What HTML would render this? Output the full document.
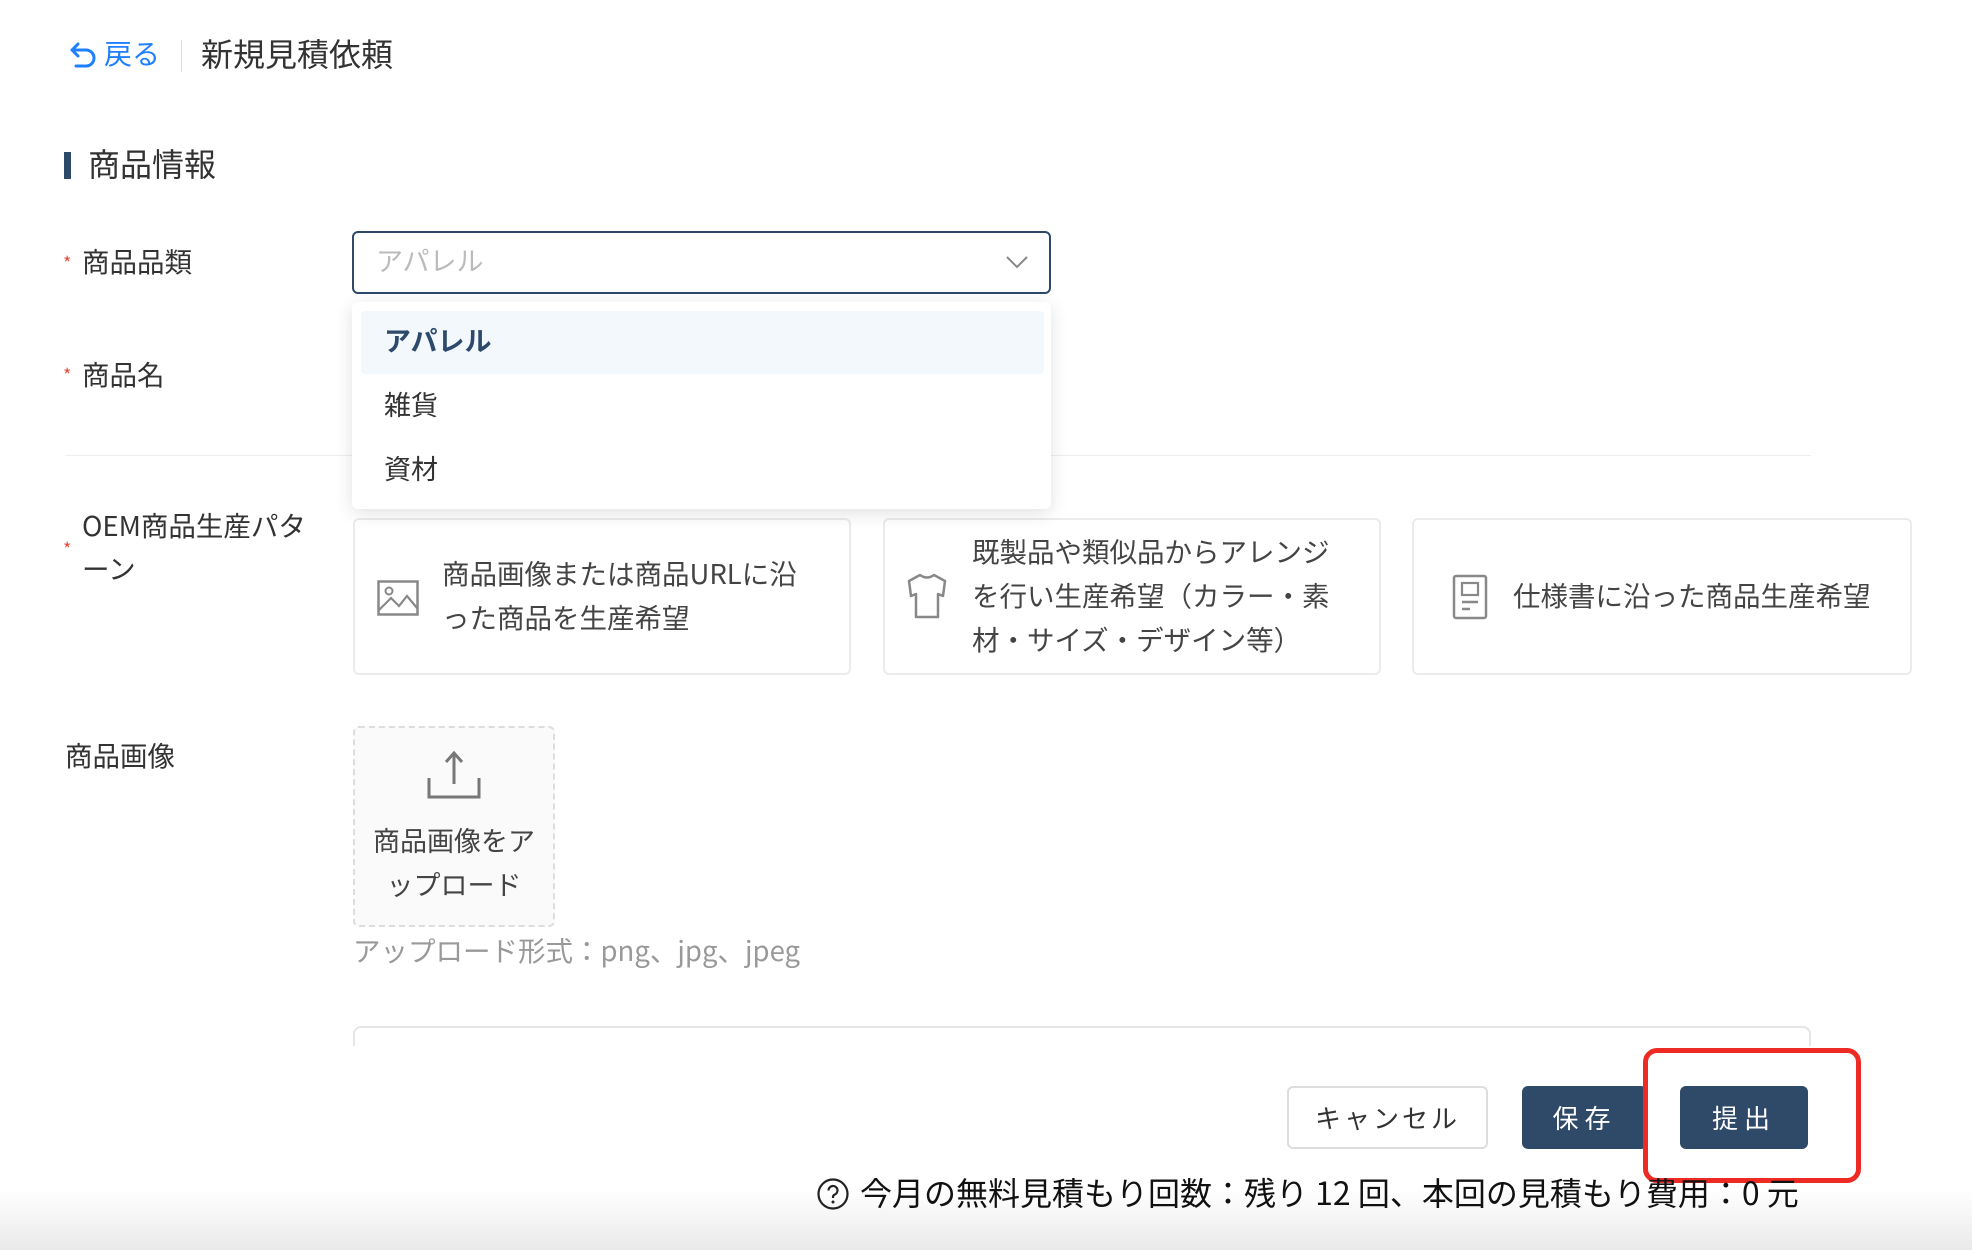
<!DOCTYPE html>
<html><head><meta charset="utf-8"><style>
*{box-sizing:border-box;margin:0;padding:0}
body{width:1972px;height:1250px;position:relative;overflow:hidden;background:#fff;font-family:"Noto Sans CJK JP","Liberation Sans",sans-serif;color:#333}
.a{position:absolute;white-space:nowrap}
.lbl{font-size:27.5px;color:#333;line-height:32px}
.star{color:#e74c3c;font-size:18px}
.card{position:absolute;top:518px;height:157px;border:2px solid #ebebeb;border-radius:6px;background:#fff}
.ct{position:absolute;font-size:27.5px;line-height:44px;color:#444;white-space:nowrap}
.btn{position:absolute;top:1086px;height:63px;border-radius:6px;font-size:26px;display:flex;align-items:center;justify-content:center;letter-spacing:6px}
</style></head><body>
<svg class="a" style="left:68px;top:40px" width="34" height="32" viewBox="0 0 34 32"><path d="M10 4 L4 10 L10 16 M4 10 H18 a8 8 0 0 1 0 16 H8" fill="none" stroke="#1e80ff" stroke-width="3" stroke-linecap="round" stroke-linejoin="round"/></svg>
<div class="a" style="left:104px;top:35px;font-size:28px;color:#1e80ff;line-height:36px">戻る</div>
<div class="a" style="left:181px;top:40px;width:1px;height:32px;background:#ddd"></div>
<div class="a" style="left:201px;top:33px;font-size:32px;color:#333;line-height:40px">新規見積依頼</div>
<div class="a" style="left:64px;top:152px;width:7px;height:27px;background:#2d4a6b"></div>
<div class="a" style="left:88px;top:143px;font-size:32px;color:#333;line-height:40px">商品情報</div>
<div class="a star" style="left:63px;top:250px">*</div>
<div class="a lbl" style="left:82px;top:244px">商品品類</div>
<div class="a star" style="left:63px;top:362px">*</div>
<div class="a lbl" style="left:82px;top:357px">商品名</div>
<div class="a" style="left:65px;top:455px;width:1746px;height:1px;background:#eee"></div>
<div class="a lbl" style="left:82px;top:508px">OEM商品生産パタ</div>
<div class="a star" style="left:63px;top:536px">*</div>
<div class="a lbl" style="left:82px;top:551px">ーン</div>
<div class="a lbl" style="left:65px;top:738px">商品画像</div>
<div class="a" style="left:352px;top:231px;width:699px;height:63px;border:2px solid #2d4a6b;border-radius:6px;background:#fff"></div>
<div class="a" style="left:376px;top:243px;font-size:27px;color:#bbb;line-height:34px">アパレル</div>
<svg class="a" style="left:1005px;top:254px" width="24" height="16" viewBox="0 0 24 16"><path d="M2 3 L12 13 L22 3" fill="none" stroke="#888" stroke-width="2"/></svg>
<div class="card" style="left:353px;width:498px"></div>
<svg class="a" style="left:377px;top:580px" width="42" height="36" viewBox="0 0 42 36"><rect x="1.5" y="1.5" width="39" height="33" fill="none" stroke="#888" stroke-width="2.5"/><circle cx="12" cy="11" r="3.5" fill="none" stroke="#888" stroke-width="2"/><path d="M2 30 L14 18 L22 26 L30 16 L40 28" fill="none" stroke="#888" stroke-width="2.2"/></svg>
<div class="ct" style="left:442px;top:550px">商品画像または商品URLに沿<br>った商品を生産希望</div>
<div class="card" style="left:883px;width:498px"></div>
<svg class="a" style="left:905px;top:572px" width="44" height="48" viewBox="0 0 44 48"><path d="M15 3 Q22 8 29 3 L40 9 L38 24 L33 22 L33 45 L11 45 L11 22 L6 24 L4 9 Z" fill="none" stroke="#888" stroke-width="2.5" stroke-linejoin="round"/></svg>
<div class="ct" style="left:972px;top:528px">既製品や類似品からアレンジ<br>を行い生産希望（カラー・素<br>材・サイズ・デザイン等）</div>
<div class="card" style="left:1412px;width:500px"></div>
<svg class="a" style="left:1452px;top:574px" width="36" height="46" viewBox="0 0 36 46"><rect x="2" y="2" width="32" height="42" rx="2" fill="none" stroke="#888" stroke-width="2.5"/><rect x="10" y="9" width="16" height="12" fill="none" stroke="#888" stroke-width="2.2"/><path d="M10 28 H26 M10 35 H18" stroke="#888" stroke-width="2.5"/></svg>
<div class="ct" style="left:1513px;top:572px">仕様書に沿った商品生産希望</div>
<div class="a" style="left:352px;top:302px;width:699px;height:207px;background:#fff;border-radius:6px;box-shadow:0 4px 18px rgba(0,0,0,0.12)"></div>
<div class="a" style="left:361px;top:311px;width:683px;height:63px;background:#f3f8fd;border-radius:4px"></div>
<div class="a" style="left:384px;top:322px;font-size:27px;font-weight:bold;color:#2d4a6b;line-height:36px">アパレル</div>
<div class="a" style="left:384px;top:386px;font-size:27px;color:#333;line-height:36px">雑貨</div>
<div class="a" style="left:384px;top:450px;font-size:27px;color:#333;line-height:36px">資材</div>
<div class="a" style="left:353px;top:726px;width:202px;height:201px;border:2px dashed #ddd;border-radius:6px;background:#fafafa"></div>
<svg class="a" style="left:426px;top:750px" width="56" height="52" viewBox="0 0 56 52"><path d="M28 4 V34 M20 12 L28 3 L36 12" fill="none" stroke="#777" stroke-width="3"/><path d="M3 28 V47 H53 V28" fill="none" stroke="#777" stroke-width="3"/></svg>
<div class="a" style="left:353px;top:818px;width:202px;text-align:center;font-size:27px;line-height:44px;color:#444">商品画像をア<br>ップロード</div>
<div class="a" style="left:353px;top:932px;font-size:27.5px;color:#999;line-height:34px">アップロード形式：png、jpg、jpeg</div>
<div class="a" style="left:353px;top:1026px;width:1458px;height:20px;border:2px solid #e5e5e5;border-bottom:none;border-radius:8px 8px 0 0"></div>
<div class="a" style="left:340px;top:1046px;width:1490px;height:10px;background:#fff"></div>
<div class="btn" style="left:1287px;width:201px;border:2px solid #ddd;background:#fff;color:#333;letter-spacing:3px">キャンセル</div>
<div class="btn" style="left:1522px;width:125px;background:#2f4a69;color:#fff">保存</div>
<div class="btn" style="left:1680px;width:128px;background:#2f4a69;color:#fff">提出</div>
<div class="a" style="left:1643px;top:1048px;width:218px;height:135px;border:5px solid #ee2a24;border-radius:14px"></div>
<div class="a" style="left:0;top:1190px;width:1972px;height:60px;background:linear-gradient(#fff,#e9e9e9)"></div>
<svg class="a" style="left:816px;top:1177px" width="34" height="34" viewBox="0 0 34 34"><circle cx="17" cy="17" r="14.5" fill="none" stroke="#222" stroke-width="2.2"/><path d="M12.5 13.5 a4.5 4.5 0 1 1 6 4.2 c-1.5 .7 -1.5 1.5 -1.5 3.3" fill="none" stroke="#222" stroke-width="2.2"/><circle cx="17" cy="25" r="1.5" fill="#222"/></svg>
<div class="a" style="left:860px;top:1172px;font-size:32px;color:#111;line-height:40px">今月の無料見積もり回数：残り 12 回、本回の見積もり費用：0 元</div>
</body></html>
